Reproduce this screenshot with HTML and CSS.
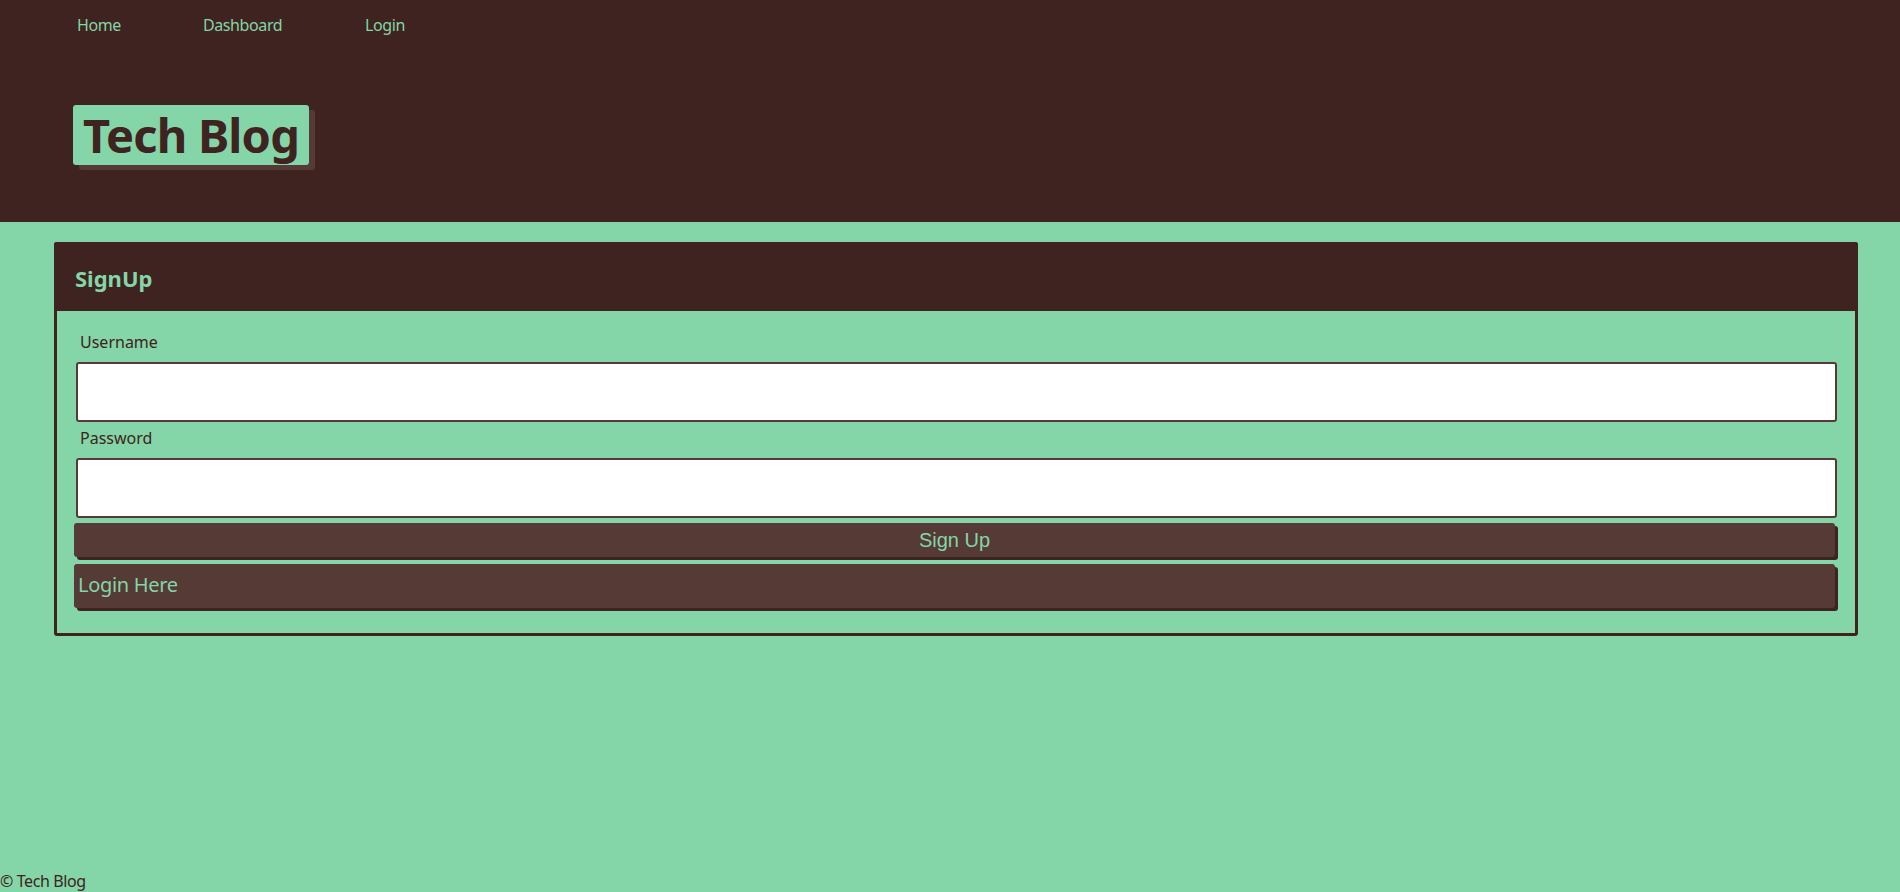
FILE: index.html
```html
<!DOCTYPE html>
<html lang="en">
<head>
<meta charset="utf-8">
<title>Tech Blog</title>
<link rel="stylesheet" href="styles.css">
</head>
<body>
<header class="site-header">
  <nav class="nav">
    <a class="nav-link" href="#">Home</a>
    <a class="nav-link" href="#">Dashboard</a>
    <a class="nav-link" href="#">Login</a>
  </nav>
  <div class="brand-wrap">
    <h1 class="brand">Tech Blog</h1>
  </div>
</header>
<main class="main">
  <section class="card">
    <div class="card-header">
      <h2 class="card-title">SignUp</h2>
    </div>
    <form class="card-body">
      <label class="field-label" for="username">Username</label>
      <input class="field-input" id="username" type="text">
      <label class="field-label" for="password">Password</label>
      <input class="field-input" id="password" type="password">
      <button class="btn btn-submit" type="button">Sign Up</button>
      <a class="btn btn-link" href="#">Login Here</a>
    </form>
  </section>
</main>
<footer class="footer">© Tech Blog</footer>
</body>
</html>
```
FILE: styles.css
```css
* { box-sizing: border-box; }
html, body { height: 100%; }
body {
  margin: 0;
  min-height: 100vh;
  display: flex;
  flex-direction: column;
  background: #84d5a7;
  color: #3e2320;
  font-family: "Noto Sans", "Open Sans", sans-serif;
}
.site-header {
  background: #3e2320;
  height: 222px;
  padding: 0 0 0 77px;
}
.nav {
  display: grid;
  grid-template-columns: 126px 162px auto;
  height: 50px;
  align-items: start;
  justify-content: start;
  padding-top: 13px;
}
.nav-link {
  color: #84d5a7;
  text-decoration: none;
  font-size: 16px;
  line-height: 24px;
  letter-spacing: -0.4px;
}
.brand-wrap {
  padding-top: 55px;
  margin-left: -4px;
}
.brand {
  display: inline-block;
  margin: 0;
  background: #84d5a7;
  color: #3e2320;
  font-size: 47px;
  font-weight: 700;
  line-height: 60px;
  height: 60px;
  padding: 0 10px;
  border-radius: 3px;
  box-shadow: 6px 5px 0 #553a36;
  letter-spacing: -0.8px;
}
.main {
  padding: 20px 42px 0 54px;
}
.card {
  border: 3px solid #3e2320;
  border-radius: 3px;
}
.card-header {
  background: #3e2320;
  height: 69px;
  margin: -3px -3px 0 -3px;
  padding: 0 0 0 21px;
  display: flex;
  align-items: center;
  border-radius: 3px 3px 0 0;
}
.card-title {
  margin: 0;
  color: #84d5a7;
  font-size: 22px;
  font-weight: 700;
  line-height: 30px;
  padding-top: 3px;
}
.card-body {
  display: flex;
  flex-direction: column;
  padding: 19px 18px 25px 17px;
}
.field-label {
  font-size: 16px;
  line-height: 24px;
  padding-left: 6px;
  margin-bottom: 8px;
}
.field-input {
  height: 60px;
  border: 2px solid #553a36;
  border-radius: 3px;
  background: #fff;
  margin-left: 2px;
  margin-bottom: 4px;
  font: inherit;
}
.btn {
  display: block;
  background: #553a36;
  color: #84d5a7;
  border: none;
  border-radius: 3px;
  box-shadow: 3px 3px 0 #3e2320;
  width: calc(100% - 2px);
}
.btn-submit {
  margin-top: 1px;
  height: 34px;
  font-family: "Liberation Sans", Arial, sans-serif;
  font-size: 20px;
  padding: 0;
}
.btn-link {
  margin-top: 7px;
  height: 44px;
  font-size: 20px;
  line-height: 42px;
  padding-left: 4px;
  text-decoration: none;
  letter-spacing: -0.3px;
}
.footer {
  margin-top: auto;
  font-size: 16px;
  line-height: 22px;
  letter-spacing: -0.4px;
}
```
